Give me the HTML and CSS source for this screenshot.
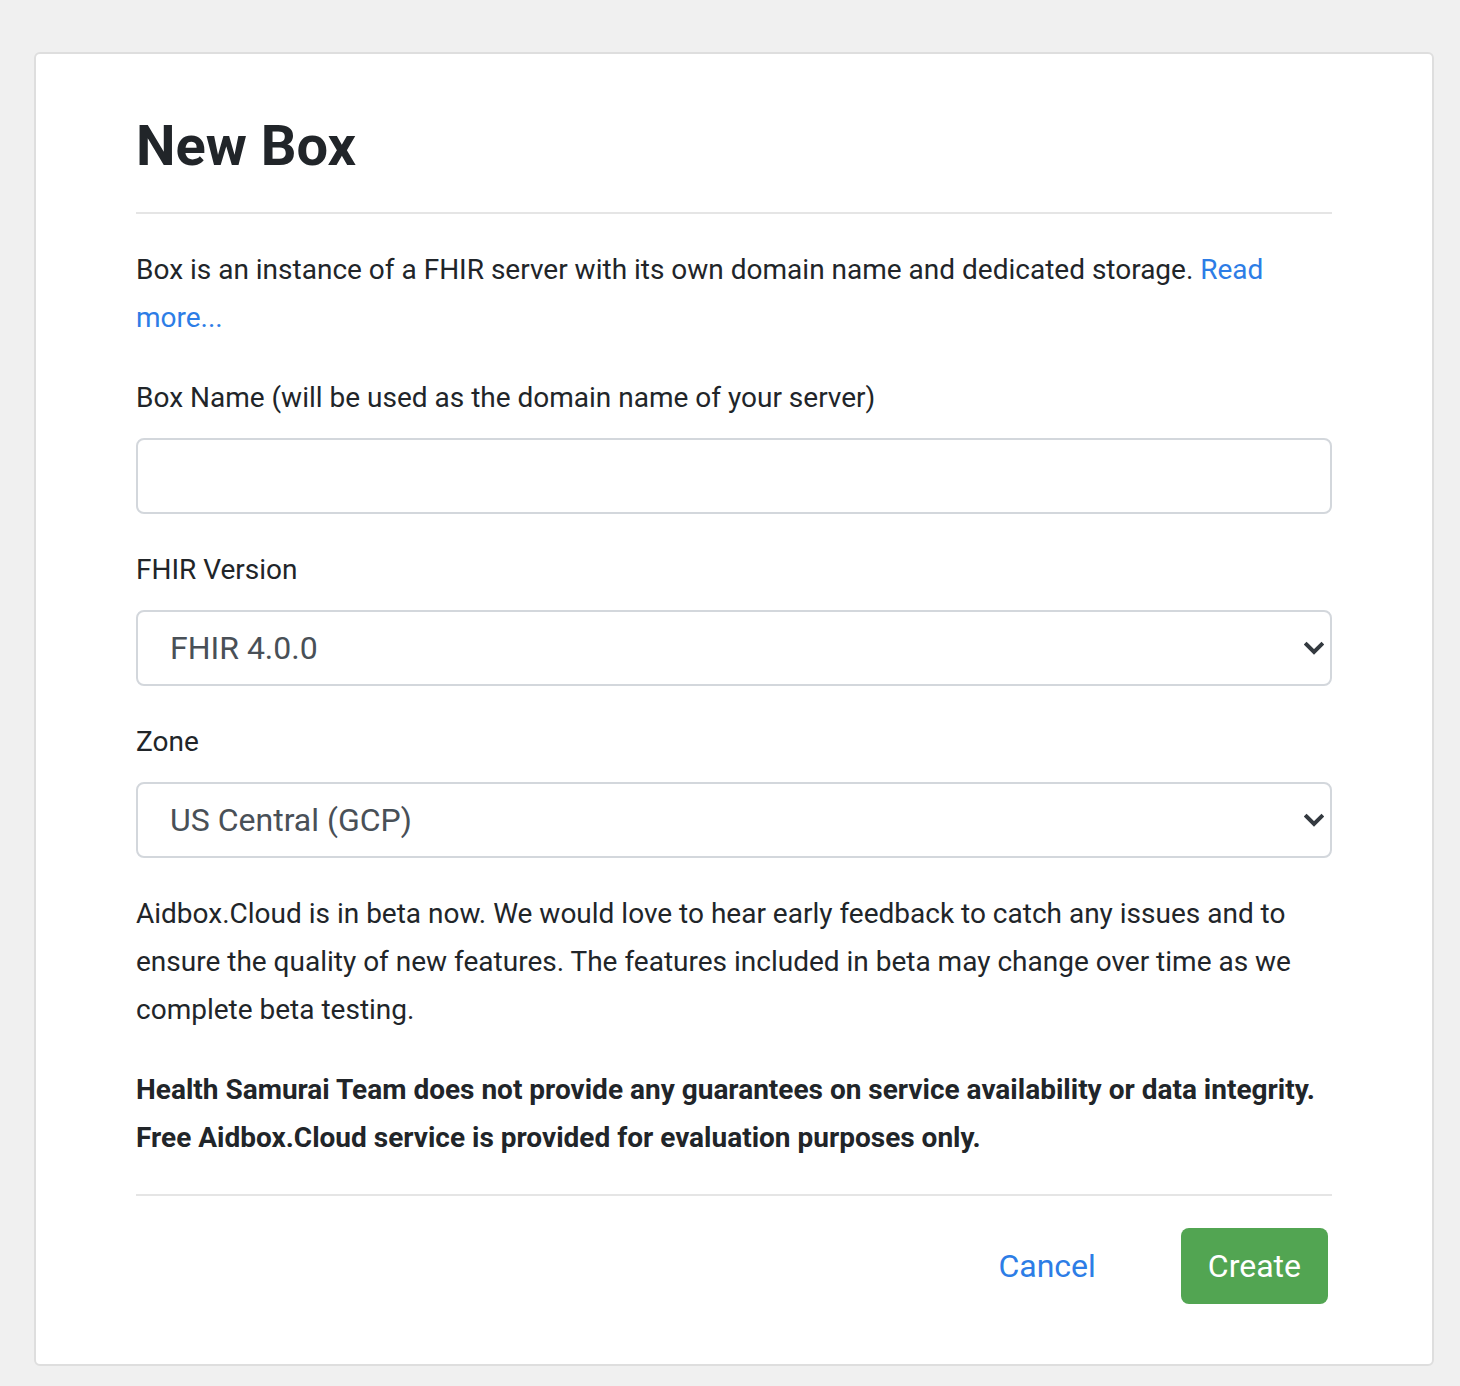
FILE: index.html
```html
<!DOCTYPE html>
<html lang="en">
<head>
<meta charset="utf-8">
<title>New Box</title>
<link rel="stylesheet" href="styles.css">
</head>
<body>
<div class="page">
  <div class="card">
    <h1 class="title">New Box</h1>
    <hr class="rule">
    <p class="text">Box is an instance of a FHIR server with its own domain name and dedicated storage. <a class="link" href="#">Read more...</a></p>
    <div class="group">
      <label class="label">Box Name (will be used as the domain name of your server)</label>
      <input class="control" type="text">
    </div>
    <div class="group">
      <label class="label">FHIR Version</label>
      <div class="select-wrap">
        <select class="control select"><option>FHIR 4.0.0</option></select>
        <svg class="chevron" width="20" height="14" viewBox="0 0 20 14"><path d="M2.5 3.5 L10 11 L17.5 3.5" fill="none" stroke="#343a40" stroke-width="4" stroke-linecap="square" stroke-linejoin="miter"/></svg>
      </div>
    </div>
    <div class="group">
      <label class="label">Zone</label>
      <div class="select-wrap">
        <select class="control select"><option>US Central (GCP)</option></select>
        <svg class="chevron" width="20" height="14" viewBox="0 0 20 14"><path d="M2.5 3.5 L10 11 L17.5 3.5" fill="none" stroke="#343a40" stroke-width="4" stroke-linecap="square" stroke-linejoin="miter"/></svg>
      </div>
    </div>
    <p class="text">Aidbox.Cloud is in beta now. We would love to hear early feedback to catch any issues and to ensure the quality of new features. The features included in beta may change over time as we complete beta testing.</p>
    <p class="text strong">Health Samurai Team does not provide any guarantees on service availability or data integrity. Free Aidbox.Cloud service is provided for evaluation purposes only.</p>
    <hr class="rule">
    <div class="actions">
      <button class="btn btn-link" type="button">Cancel</button>
      <button class="btn btn-success" type="button">Create</button>
    </div>
  </div>
</div>
</body>
</html>
```

FILE: styles.css
```css
* { box-sizing: border-box; }
html, body { margin: 0; padding: 0; }
body {
  background: #f0f0f0;
  font-family: Roboto, "Liberation Sans", Arial, sans-serif;
  color: #212529;
  font-size: 28px;
  line-height: 48px;
}
.page {
  padding: 52px 26px 20px 34px;
}
.card {
  background: #fff;
  border: 2px solid #dedede;
  border-radius: 6px;
  padding: 52px 100px 60px 100px;
}
.title {
  margin: 0;
  font-size: 56px;
  font-weight: 700;
  line-height: 80px;
  padding: 0 0 26px;
}
.rule {
  border: 0;
  border-top: 2px solid #e5e5e5;
  margin: 0 0 32px;
}
.text {
  margin: 0 0 32px;
}
.strong { font-weight: 700; }
.link {
  color: #2d7de6;
  text-decoration: none;
}
.group {
  margin-bottom: 32px;
}
.label {
  display: block;
  margin-bottom: 16px;
}
.control {
  display: block;
  width: 100%;
  height: 76px;
  border: 2px solid #d3d7dc;
  border-radius: 8px;
  background: #fff;
  font-family: Roboto, "Liberation Sans", Arial, sans-serif;
  font-size: 32px;
  color: #495057;
  padding: 0 32px;
  outline: none;
}
.select-wrap {
  position: relative;
}
.select {
  appearance: none;
  -webkit-appearance: none;
}
.chevron {
  position: absolute;
  right: 8px;
  top: 31px;
  pointer-events: none;
}
.actions {
  display: flex;
  justify-content: flex-end;
  align-items: center;
  gap: 58px;
  padding-right: 4px;
}
.btn {
  font-family: Roboto, "Liberation Sans", Arial, sans-serif;
  font-size: 32px;
  height: 76px;
  border: 0;
  border-radius: 8px;
  padding: 0 27px;
  cursor: pointer;
}
.btn-link {
  background: transparent;
  color: #2d7de6;
}
.btn-success {
  background: #52a552;
  color: #fff;
}
```
